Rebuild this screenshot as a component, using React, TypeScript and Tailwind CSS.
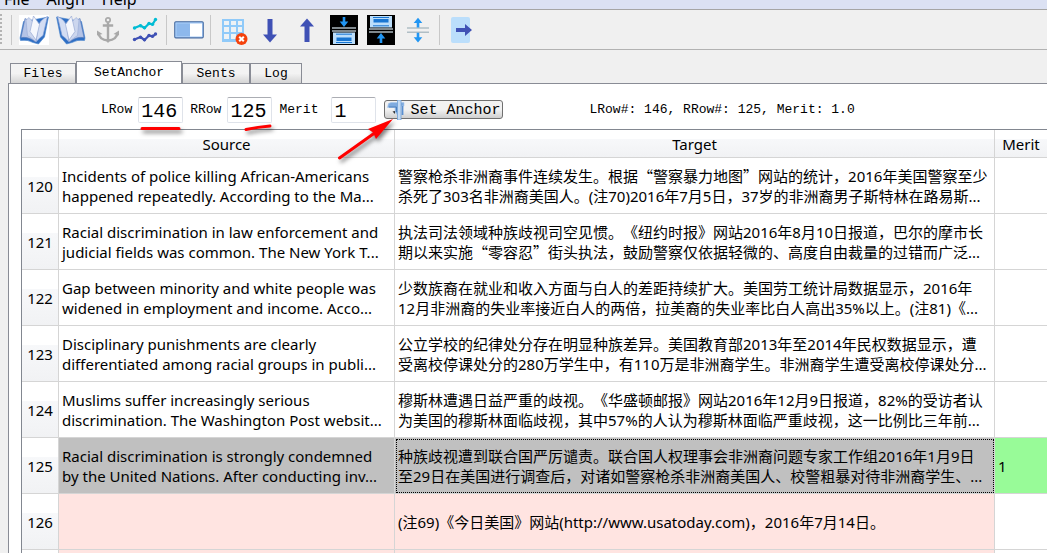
import type { ReactNode } from 'react';

const MONO = "font-['Liberation_Mono','Noto_Sans_CJK_SC',monospace]";
const SANS = "font-['Noto_Sans','Noto_Sans_CJK_SC',sans-serif]";

type Row = { id: number; source: string[]; target: string[]; merit?: string; tone: 'plain' | 'selected' | 'unpaired' };

const rows: Row[] = [
  {
    id: 120,
    source: ['Incidents of police killing African-Americans', 'happened repeatedly. According to the Ma...'],
    target: ['警察枪杀非洲裔事件连续发生。根据“警察暴力地图”网站的统计，2016年美国警察至少', '杀死了303名非洲裔美国人。(注70)2016年7月5日，37岁的非洲裔男子斯特林在路易斯...'],
    tone: 'plain',
  },
  {
    id: 121,
    source: ['Racial discrimination in law enforcement and', 'judicial fields was common. The New York T...'],
    target: ['执法司法领域种族歧视司空见惯。《纽约时报》网站2016年8月10日报道，巴尔的摩市长', '期以来实施“零容忍”街头执法，鼓励警察仅依据轻微的、高度自由裁量的过错而广泛...'],
    tone: 'plain',
  },
  {
    id: 122,
    source: ['Gap between minority and white people was', 'widened in employment and income. Acco...'],
    target: ['少数族裔在就业和收入方面与白人的差距持续扩大。美国劳工统计局数据显示，2016年', '12月非洲裔的失业率接近白人的两倍，拉美裔的失业率比白人高出35%以上。(注81)《...'],
    tone: 'plain',
  },
  {
    id: 123,
    source: ['Disciplinary punishments are clearly', 'differentiated among racial groups in publi...'],
    target: ['公立学校的纪律处分存在明显种族差异。美国教育部2013年至2014年民权数据显示，遭', '受离校停课处分的280万学生中，有110万是非洲裔学生。非洲裔学生遭受离校停课处分...'],
    tone: 'plain',
  },
  {
    id: 124,
    source: ['Muslims suffer increasingly serious', 'discrimination. The Washington Post websit...'],
    target: ['穆斯林遭遇日益严重的歧视。《华盛顿邮报》网站2016年12月9日报道，82%的受访者认', '为美国的穆斯林面临歧视，其中57%的人认为穆斯林面临严重歧视，这一比例比三年前...'],
    tone: 'plain',
  },
  {
    id: 125,
    source: ['Racial discrimination is strongly condemned', 'by the United Nations. After conducting inv...'],
    target: ['种族歧视遭到联合国严厉谴责。联合国人权理事会非洲裔问题专家工作组2016年1月9日', '至29日在美国进行调查后，对诸如警察枪杀非洲裔美国人、校警粗暴对待非洲裔学生、...'],
    merit: '1',
    tone: 'selected',
  },
  { id: 126, source: [], target: ['(注69)《今日美国》网站(http://www.usatoday.com)，2016年7月14日。'], tone: 'unpaired' },
  { id: 127, source: [], target: [], tone: 'unpaired' },
];

const toneClass = { plain: 'bg-white', selected: 'bg-[#c0c0c0]', unpaired: 'bg-[#ffe4e1]' };

/* Curly quotes take the full-width form of the Chinese face. */
function Lines({ lines }: { lines: string[] }) {
  return (
    <>
      {lines.map((line) => (
        <div key={line} className="whitespace-nowrap">
          {line.split(/([“”])/).map((part, i) =>
            part === '“' || part === '”' ? (
              <span key={i} className="font-['Noto_Sans_CJK_SC',sans-serif]">{part}</span>
            ) : (
              part
            ),
          )}
        </div>
      ))}
    </>
  );
}

function Svg({ children }: { children: ReactNode }) {
  return <svg viewBox="0 0 30 30" className="size-[30px]" aria-hidden="true">{children}</svg>;
}

function Book({ flip = false }: { flip?: boolean }) {
  return (
    <Svg>
      {!flip && <rect width="30" height="30" fill="#fff" />}
      <g transform={flip ? 'translate(30 0) scale(-1 1)' : undefined} strokeLinejoin="round">
        <path d="M4.500 6.500 1 23 1.500 25.500Q9 24.500 14 27.500L19.500 29 25.500 22 29.500 2Z" fill="#2f6fc4" stroke="#4c86cf" strokeWidth=".6" />
        <path d="M6 3.500 2 22.500Q10 21.500 16.500 27L15 15Q12 5.500 6 3.500Z" fill="#b4c3e6" stroke="#5f7fbd" strokeWidth=".7" />
        <path d="M28.500 1.500Q21 4.500 19 12L17 27Q20 23 24 20.500Z" fill="#d3ddf3" stroke="#7f9bd2" strokeWidth=".7" />
        <path d="M7 5 10 2.500 19 12 17 26.500 8.500 20.500Z" fill="#ccd6ee" stroke="#90a4d2" strokeWidth=".5" />
        <path d="M14.500 1 20.500 9.500 17 25 11 16.500Z" fill="#f5f7fd" stroke="#9aabd4" strokeWidth=".7" />
      </g>
    </Svg>
  );
}

function AnchorIcon() {
  return (
    <Svg>
      <g fill="none" stroke="#a9a9a9">
        <circle cx="15" cy="5" r="2.2" strokeWidth="1.7" />
        <path d="M15 7.5V25M9.8 10.5H20.2" strokeWidth="2.4" />
        <path d="M5.5 18C6 23 10 25 15 25.5 20 25 24 23 24.500 18" strokeWidth="2.500" />
      </g>
      <path d="M4 15.500 4 20.500 9.500 19Z M26 15.500 26 20.500 20.500 19Z M12 24.500 15 28 18 24.500Z" fill="#a9a9a9" />
    </Svg>
  );
}

function ChartIcon() {
  return (
    <Svg>
      <g fill="none" strokeWidth="2.2">
        <path d="M4.500 13 10.500 10.500 14.500 13 19 8.500 22.500 9.500 25.500 4.500" stroke="#00bcd4" />
        <path d="M4.500 24.500 10.500 22 14.500 25 19 20.500 22.500 21.500 25.500 19" stroke="#3f51b5" />
      </g>
      <g fill="#00bcd4">
        <circle cx="4.500" cy="13" r="1.700" /><circle cx="10.500" cy="10.700" r="1.700" /><circle cx="14.500" cy="12.700" r="1.700" />
        <circle cx="19" cy="8.500" r="1.700" /><circle cx="22.500" cy="9.300" r="1.700" /><circle cx="25.500" cy="4.500" r="1.700" />
      </g>
      <g fill="#3f51b5">
        <circle cx="4.500" cy="24.500" r="1.700" /><circle cx="10.500" cy="22.200" r="1.700" /><circle cx="14.500" cy="24.700" r="1.700" />
        <circle cx="19" cy="20.500" r="1.700" /><circle cx="22.500" cy="21.300" r="1.700" /><circle cx="25.500" cy="19" r="1.700" />
      </g>
    </Svg>
  );
}

function ToggleIcon() {
  return (
    <Svg>
      <rect x=".8" y="6.800" width="28.400" height="16" rx="1" fill="#8db8ec" stroke="#45699f" strokeWidth="1.200" />
      <rect x="2" y="8" width="26" height="13.600" fill="none" stroke="#a9cdf7" />
      <rect x="16" y="8.500" width="12" height="13" fill="#fff" />
    </Svg>
  );
}

function TableDeleteIcon() {
  return (
    <Svg>
      <rect x="4" y="4" width="22" height="23" fill="#90caf9" />
      <path d="M6 6h5v4H6zM13 6h5v4h-5zM20 6h4v4h-4zM6 12h5v5H6zM13 12h5v5h-5zM20 12h4v5h-4zM6 19h5v5H6zM13 19h5v5h-5z" fill="#eef2f5" />
      <circle cx="23.500" cy="24" r="6" fill="#f4420d" />
      <path d="m21.200 21.700 4.600 4.600m0-4.600-4.600 4.600" stroke="#fff" strokeWidth="2" />
    </Svg>
  );
}

function ArrowIcon({ up = false }: { up?: boolean }) {
  return (
    <Svg>
      <path d="M12.500 4h5v15.500H22L15 27.500 8 19.500h4.500Z" fill="#3f51b5" transform={up ? 'rotate(180 15 15.500)' : undefined} />
    </Svg>
  );
}

function InsertIcon({ above = false }: { above?: boolean }) {
  return (
    <Svg>
      <rect x="1" width="28" height="30" fill="#000" />
      <g transform={above ? 'rotate(180 15 15)' : undefined}>
        <path d="M13.700 2h2.600v4.500h3L15 12l-4.300-5.500h3Z" fill="#2196f3" />
        <path d="M3 13h24M3 16h24" stroke="#a9b5bc" strokeWidth="1.300" />
        <path d="M4 17.500h22V29H4Z" fill="#bbdefb" />
        <path d="M7 19.200h16M7 27.500h16" stroke="#1976d2" strokeWidth="1" />
        <path d="M7.500 22.500h15v3.500h-15z" fill="#1976d2" />
      </g>
    </Svg>
  );
}

function SplitIcon() {
  return (
    <Svg>
      <path d="M4 13h22M4 17.200h22" stroke="#b0bec5" strokeWidth="1.600" />
      <path d="M15 2.800 19.300 8h-3v4.500h-2.600V8h-3ZM15 27.500l4.300-5.200h-3v-4.500h-2.600v4.500h-3Z" fill="#2196f3" />
    </Svg>
  );
}

function ExportIcon() {
  return (
    <Svg>
      <rect x="4" y="2" width="19" height="26" rx="2" fill="#bbdefb" />
      <path d="M9 13h9V9l7 6-7 6v-4H9Z" fill="#3f51b5" />
    </Svg>
  );
}

function CaliperIcon() {
  return (
    <svg viewBox="0 0 20 20" className="size-5 shrink-0" aria-hidden="true">
      <path d="M2.500 3.500 5 2.500H18v3.500H11.500V15L9 12V7.500H1.500Z" fill="#7fabdf" stroke="#a9c8ec" strokeWidth=".6" />
      <path d="M3 7h7.500v5" stroke="#4e80bd" fill="none" />
      <path d="M11.500 0h3.500v20h-3.500Z" fill="#c7dcf3" stroke="#6f9fd6" strokeWidth=".8" />
      <path d="M16.500 6v9" fill="none" stroke="#5a8fd0" strokeWidth="1.800" />
      <path d="M6.500 11.500 9 14v-3Z" fill="#333" />
    </svg>
  );
}

function Tool({ label, children }: { label: string; children: ReactNode }) {
  return (
    <button type="button" aria-label={label} className="flex w-[37px] shrink-0 items-center justify-center">
      {children}
    </button>
  );
}

function Separator() {
  return <div className="flex h-[30px] w-[7px] shrink-0 justify-center"><div className="w-px bg-[#c8c8c8]" /></div>;
}

function Tab({ label, width, active = false }: { label: string; width: string; active?: boolean }) {
  return (
    <button
      type="button"
      role="tab"
      aria-selected={active}
      className={`${width} border border-[#898c95] text-center text-[13px] ${
        active ? 'relative -mb-px h-[23px] border-b-0 bg-white' : 'h-5 border-b-0 bg-linear-to-b from-[#f3f3f3] from-50% to-[#d5d5d5]'
      }`}
    >
      {label}
    </button>
  );
}

function NumberField({ id, label, value, gap }: { id: string; label: string; value: string; gap: string }) {
  return (
    <div className={`flex items-center ${gap}`}>
      <label htmlFor={id} className="text-[13px]">{label}</label>
      <input id={id} defaultValue={value} className="h-[26px] w-[45px] rounded-xs border border-[#dfe3ea] border-t-[#abadb3] bg-white px-[2px] pt-1 text-[20px] leading-5 outline-none" />
    </div>
  );
}

const headBg = 'bg-linear-to-b from-white from-35% via-[#f7f8fa] via-35% to-[#f1f2f4]';

export default function App() {
  return (
    <div className={`h-screen overflow-hidden bg-[#f0f0f0] text-black ${MONO}`}>
      <nav className={`flex h-[9px] items-end gap-[17px] overflow-hidden bg-[#dbe1f3] pl-1 text-[16px] leading-[19px] ${SANS}`}>
        <a href="#file">File</a>
        <a href="#align">Align</a>
        <a href="#help">Help</a>
      </nav>
      <div className="flex h-[41px] items-center border-t border-b border-t-[#a5a5a5] border-b-[#b2b2b2]">
        <div className="mr-[6px] h-[31px] w-[2px] bg-[repeating-linear-gradient(to_bottom,#b4b4b4_0_2px,transparent_2px_4px)]" />
        <Separator />
        <Tool label="Open left"><Book /></Tool>
        <Tool label="Open right"><Book flip /></Tool>
        <Tool label="Anchor"><AnchorIcon /></Tool>
        <Tool label="Chart"><ChartIcon /></Tool>
        <Separator />
        <Tool label="Toggle"><ToggleIcon /></Tool>
        <Separator />
        <Tool label="Delete table"><TableDeleteIcon /></Tool>
        <Tool label="Move down"><ArrowIcon /></Tool>
        <Tool label="Move up"><ArrowIcon up /></Tool>
        <Tool label="Merge below"><InsertIcon /></Tool>
        <Tool label="Merge above"><InsertIcon above /></Tool>
        <Tool label="Split"><SplitIcon /></Tool>
        <Separator />
        <Tool label="Export"><ExportIcon /></Tool>
      </div>

      <div role="tablist" className="flex items-end pt-[11px] pl-[10px]">
        <Tab label="Files" width="w-[66px]" />
        <Tab label="SetAnchor" width="w-[106px]" active />
        <Tab label="Sents" width="w-[68px]" />
        <Tab label="Log" width="w-[52px]" />
      </div>

      <main className="relative ml-2 border-t border-l border-[#898c95] bg-white">
        <form className="flex h-[45px] items-center pt-[6px] pl-[92px]">
          <div className="flex items-center gap-[7px]">
            <NumberField id="lrow" label="LRow" value="146" gap="gap-[6px]" />
            <NumberField id="rrow" label="RRow" value="125" gap="gap-[6px]" />
            <NumberField id="merit" label="Merit" value="1" gap="gap-[13px]" />
          </div>
          <button type="button" className="ml-2 flex h-[19px] items-center gap-1 rounded-[3px] border border-[#707070] bg-linear-to-b from-[#f2f2f2] from-50% to-[#cfcfcf] pr-[2px] pl-px text-[15px]">
            <CaliperIcon />
            <span className="pt-1">Set Anchor</span>
          </button>
          <output className="ml-[86px] text-[13px] whitespace-nowrap">LRow#: 146, RRow#: 125, Merit: 1.0</output>
        </form>

        <div className={`ml-3 border-t border-l border-[#828790] ${SANS}`}>
          <table className="w-full table-fixed border-separate border-spacing-0 text-[15px] leading-5 [text-spacing-trim:space-all]">
            <colgroup>
              <col className="w-[37px]" />
              <col className="w-[336px]" />
              <col />
              <col className="w-[52px]" />
            </colgroup>
            <thead>
              <tr>
                {['', 'Source', 'Target', 'Merit'].map((h) => (
                  <th key={h} scope="col" className={`h-7 border-b border-[#d5d5d5] p-0 text-center font-normal not-last:border-r ${headBg}`}>{h}</th>
                ))}
              </tr>
            </thead>
            <tbody>
              {rows.map((row) => (
                <tr key={row.id}>
                  <th scope="row" className={`h-14 border-r border-b border-[#d5d5d5] p-0 text-center font-normal ${headBg}`}>{row.id}</th>
                  <td className={`border-r border-b border-[#d5d5d5] py-0 pr-0 pl-[3px] ${toneClass[row.tone]}`}><Lines lines={row.source} /></td>
                  <td className={`border-r border-b border-[#d5d5d5] py-0 pr-0 pl-[3px] ${toneClass[row.tone]} ${row.tone === 'selected' ? 'outline-1 -outline-offset-2 outline-black outline-dotted' : ''}`}>
                    <Lines lines={row.target} />
                  </td>
                  <td className={`border-b border-[#d5d5d5] py-0 pl-[3px] ${row.merit ? 'bg-[#98fb98]' : 'bg-white'}`}>{row.merit}</td>
                </tr>
              ))}
            </tbody>
          </table>
        </div>

        <svg viewBox="0 0 290 90" className="pointer-events-none absolute top-[26px] left-[121px] h-[90px] w-[290px] drop-shadow-[2px_3px_2px_rgba(0,0,0,0.5)]" aria-hidden="true">
          <path d="M12 18.500H49M116 19.500Q128 17 140 16" stroke="#f00" strokeWidth="3" strokeLinecap="round" fill="none" />
          <path d="M209.500 48 246 22" stroke="#f00" strokeWidth="3" strokeLinecap="round" />
          <path d="M263 9 238 19 243 22.500 246 29Z" fill="#f00" />
        </svg>
      </main>
    </div>
  );
}
